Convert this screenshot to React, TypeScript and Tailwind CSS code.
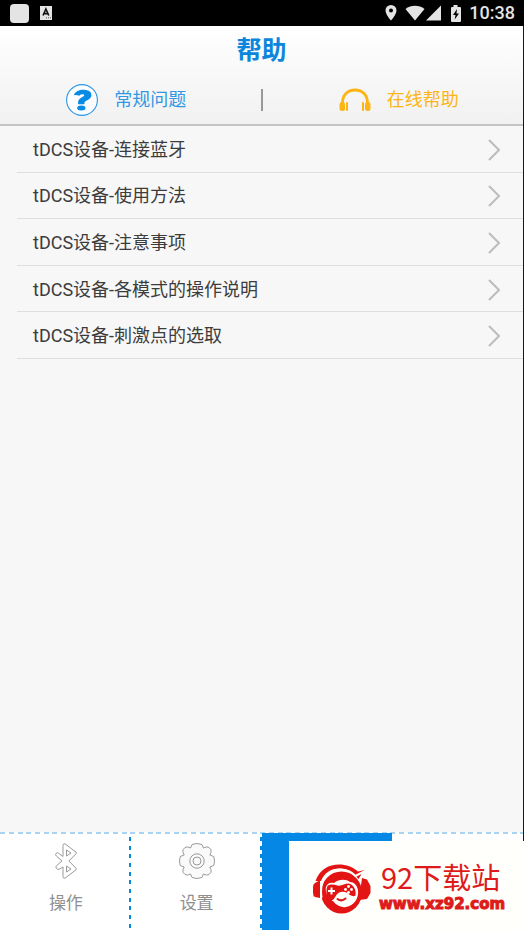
import React from 'react';

const topics = [
  'tDCS设备-连接蓝牙',
  'tDCS设备-使用方法',
  'tDCS设备-注意事项',
  'tDCS设备-各模式的操作说明',
  'tDCS设备-刺激点的选取',
];

function StatusBar() {
  return (
    <div className="flex h-[26px] shrink-0 items-center bg-black px-[10px] pr-[9px] text-[#e4e4e4]">
      <span className="h-[19px] w-[19px] rounded-[4px] bg-[#e4e4e4]" />
      <svg className="ml-[11px]" width="12" height="14" viewBox="0 0 12 14" aria-hidden="true">
        <rect width="12" height="14" fill="#e4e4e4" />
        <path d="M3 9.5 5.9 3 8.8 9.5M4 7.6h3.8" fill="none" stroke="#111" strokeWidth="1.6" />
        <path d="M6 11.8h5" stroke="#555" strokeDasharray="1 1" />
      </svg>
      <span className="flex-1" />
      <svg width="12" height="16" viewBox="0 0 12 16" fill="currentColor" aria-hidden="true">
        <path fillRule="evenodd" d="M6 0a5.5 5.5 0 0 0-5.5 5.5C.5 9.500 6 15.500 6 15.500s5.500-6 5.500-10A5.500 5.500 0 0 0 6 0Zm0 3.500a2 2 0 1 1 0 4 2 2 0 0 1 0-4Z" />
      </svg>
      <svg className="ml-[8px]" width="20" height="16" viewBox="0 0 20 16" fill="currentColor" aria-hidden="true">
        <path d="M.5 4C6-.3 14-.3 19.500 4L10 15.500Z" />
      </svg>
      <svg className="ml-px" width="16" height="16" viewBox="0 0 16 16" fill="currentColor" aria-hidden="true">
        <path d="M0 15.500 15 .5v15Z" />
      </svg>
      <svg className="ml-[8px]" width="12" height="17" viewBox="0 0 12 17" fill="currentColor" aria-hidden="true">
        <path d="M3.500 0h4v2H10q1 0 1 1v13q0 1-1 1H2q-1 0-1-1V3q0-1 1-1h1.500Z" />
        <path d="M7 4 3 10h2.500l-.8 4.500L9 8.500H6.500Z" fill="#000" />
      </svg>
      <time className="ml-[7px] text-[18px] leading-[26px] font-medium">10:38</time>
    </div>
  );
}

function QuestionIcon() {
  return (
    <svg width="32" height="32" viewBox="0 0 32 32" aria-hidden="true">
      <circle cx="16" cy="16" r="15.400" fill="#fbfdff" stroke="#2b96e6" strokeWidth="1.100" />
      <path
        d="M7.800 11.200C9.500 7.200 13.500 5.600 18 5.800c4.600.1 7.600 2.200 7.400 5.400-.2 3.300-3 4.400-5.600 5.800-1.300.8-1.500 1.800-1.400 3.200h-6.200c-.7-3.300.6-5.300 3.400-6.800 1.700-.9 2.800-1.500 2.600-2.500-.3-1-3.500-.8-4.800.9-1.500-.6-3.600-1-5.600-.6Z"
        fill="#078be4"
      />
      <ellipse cx="15.300" cy="23.900" rx="4.200" ry="2.500" fill="#078be4" />
    </svg>
  );
}

function HeadphonesIcon() {
  return (
    <svg width="32" height="24" viewBox="0 0 32 24" aria-hidden="true">
      <path d="M3.500 15C3.500 7 8.500 2 16 2s12.500 5 12.500 13" fill="none" stroke="#fdb515" strokeWidth="2.800" />
      <rect x=".5" y="14" width="5.500" height="9" rx="2.500" fill="#fdb515" />
      <rect x="26" y="14" width="5.500" height="9" rx="2.500" fill="#fdb515" />
      <rect x="7" y="14" width="2" height="9" rx="1" fill="#fdb515" />
      <rect x="23" y="14" width="2" height="9" rx="1" fill="#fdb515" />
    </svg>
  );
}

function BluetoothIcon() {
  return (
    <svg width="24" height="36" viewBox="0 0 24 36" fill="none" stroke="#999" strokeWidth="1" strokeLinejoin="round" aria-hidden="true">
      <path d="M9 2.300Q9 .5 11 .8L22 9.200Q22.800 10 22 10.800L14.800 18 22 25.200Q22.800 26 22 26.800L11 35.200Q9 35.500 9 33.700V24L5 26.300Q3.300 26.800 2.300 25.300 1.400 23.800 2.600 22.600L8 18 2.300 13Q1 11.600 2 10.400 3.200 9.200 4.600 10.200L9 13.500Z" />
      <path d="M12.500 7v6l4.500-3ZM12.500 23v6l4.500-3Z" />
    </svg>
  );
}

function GearIcon() {
  return (
    <svg width="36" height="36" viewBox="0 0 36 36" fill="none" stroke="#999" strokeWidth="1" strokeLinejoin="round" aria-hidden="true">
      <path
        fill="#fafafa"
        d="M13 1.500Q18-.5 23 1.500L24.500 5Q27.500 3 30 4.500 33 6.500 32 9.500L30.800 12 34.800 13.500Q36.200 18 34.800 22.500L30.800 24 32 26.500Q33 29.500 30 31.500 27.500 33 24.500 31L23 34.500Q18 36.500 13 34.500L11.500 31Q8.500 33 6 31.500 3 29.500 4 26.500L5.200 24 1.200 22.500Q-.2 18 1.200 13.500L5.200 12 4 9.500Q3 6.500 6 4.500 8.500 3 11.500 5Z"
      />
      <circle cx="18" cy="18" r="7.200" />
      <circle cx="18" cy="18" r="4" />
    </svg>
  );
}

function MascotLogo() {
  return (
    <svg width="58" height="50" viewBox="0 0 58 50" aria-hidden="true">
      <path d="M2.500 17C7 5 16 .5 26 .5c7 0 14 2.500 19 7l7-1.500-6.500 9C40 8 34 4.500 27 4.500 18 4.500 11 9 8 17Z" fill="#e31414" />
      <path d="M2 19 7 16v18l-5-1Q0 32 0 29v-6q0-3 2-4ZM49 14l5 1.500 3.500 6.500v7L54 35l-8 1Z" fill="#e31414" />
      <ellipse cx="28.500" cy="28.500" rx="20.500" ry="21" fill="#e31414" />
      <path d="M8.500 34C6 17 14 5.500 27 5.500c7 0 12 2.500 15.500 6.500L51 7.500 46 17" fill="none" stroke="#fffffb" strokeWidth="2" />
      <path d="M13 23c1-4 5-5 8-4 5-4 12-4 16-1 4 0 7 3 8 8 1 8-4 16-12 17-6 1-12-2-15-8-4-3-6-7-5-12Z" fill="#fffffb" />
      <path d="M14.500 22c2-2 6-2 10-.5 4 1 7-2 11-2 5 1 8 6 7 12-3 2-6-1-9-3-5-2-9 0-11 4-3 5-5 5-7 4-2-4-3-10-1-14.500Z" fill="#e31414" />
      <path d="M20 37c3 4 7 6 11 6-6 1-12 0-15-6Z" fill="#e31414" />
      <path d="M15 27h7M18.500 23.500v7" stroke="#fffffb" strokeWidth="2" />
      <path d="M24.500 35q4 3 8-.5" fill="none" stroke="#e31414" strokeWidth="2" strokeLinecap="round" />
      <g fill="#fffffb">
        <circle cx="35.500" cy="22.500" r="1.400" />
        <circle cx="32.500" cy="25.500" r="1.400" />
        <circle cx="38.500" cy="25.500" r="1.400" />
        <circle cx="35.500" cy="28.500" r="1.400" />
      </g>
    </svg>
  );
}

const dashDown =
  'bg-[repeating-linear-gradient(to_bottom,transparent_0_3px,#0688d8_3px_7px,transparent_7px_12px,#0688d8_12px_16px,transparent_16px_20px,#0688d8_20px_24px,transparent_24px_26px)]';
const dashAcross =
  'bg-[repeating-linear-gradient(to_right,#a9d3f2_0_5px,transparent_5px_9px,#a9d3f2_9px_14px,transparent_14px_18px,#a9d3f2_18px_23px,transparent_23px_26px)]';

function NavItem({ icon, label }: { icon: React.ReactNode; label: string }) {
  return (
    <button type="button" className="flex min-w-0 flex-1">
      <span className="flex flex-1 flex-col items-center gap-[10px] pt-[9px] pl-[3px] text-[17px] leading-[28px] text-[#8f8f8f]">
        {icon}
        {label}
      </span>
      <span className={'h-full w-[2px] ' + dashDown} />
    </button>
  );
}

export default function App() {
  return (
    <div className="relative flex min-h-screen flex-col bg-[#f7f7f7] font-[Roboto,'Noto_Sans_CJK_SC',sans-serif]">
      <StatusBar />
      <div className="flex flex-1 flex-col border-r border-[#111820]">
        <header className="border-b-2 border-[#c4c4c4] bg-linear-to-b from-white to-[#f1f1f1]">
          <h1 className="pt-[7px] text-center text-[25px] leading-[36px] font-bold text-[#0b86dd]">帮助</h1>
          <div className="grid h-[55px] grid-cols-[1fr_2px_1fr] items-center text-[18px] leading-[26px]">
            <button type="button" className="flex items-center justify-center gap-4 pt-[6px] pr-2 text-[#3297e4]">
              <QuestionIcon />
              常规问题
            </button>
            <span className="mt-[6px] h-[22px] bg-[#999]" />
            <button type="button" className="flex items-center justify-center gap-4 pt-[6px] pl-3 text-[#fdb515]">
              <HeadphonesIcon />
              在线帮助
            </button>
          </div>
        </header>
        <main className="flex-1">
          <ul className="ml-[17px] grid h-[233px] grid-rows-5">
            {topics.map((topic) => (
              <li key={topic} className="border-b border-[#dedede]">
                <a href="#" className="flex h-full items-center justify-between pt-[2px] pr-[22px] pl-4 text-[18px] leading-[26px] text-[#3c3c3c]">
                  {topic}
                  <svg width="14" height="22" viewBox="0 0 14 22" fill="none" stroke="#bcbcbc" strokeWidth="2" aria-hidden="true">
                    <path d="m2 1 10 10L2 21" />
                  </svg>
                </a>
              </li>
            ))}
          </ul>
        </main>
        <nav className="bg-white">
          <div className={'h-[2px] ' + dashAcross} />
          <div className="flex h-[96px]">
            <NavItem icon={<BluetoothIcon />} label="操作" />
            <NavItem icon={<GearIcon />} label="设置" />
            <button type="button" aria-label="帮助" className="-mt-px flex-1 bg-[#0588e5]" />
            <button type="button" aria-label="我的" className="flex-1" />
          </div>
        </nav>
      </div>
      <aside className="absolute right-0 bottom-0 flex h-[89px] w-[235px] items-center gap-[8px] bg-[#fffffb] pt-[6px] pl-6">
        <MascotLogo />
        <div className="flex flex-col gap-[2px] pb-[6px] whitespace-nowrap text-[#de1a1a]">
          <span className="pl-[2px] font-['Noto_Sans_CJK_SC',sans-serif] text-[29px] leading-[34px]">92下载站</span>
          <span className="font-['DejaVu_Sans',sans-serif] text-[15px] leading-[18px] font-bold [-webkit-text-stroke:1px_#de1a1a]">www.xz92.com</span>
        </div>
      </aside>
    </div>
  );
}
